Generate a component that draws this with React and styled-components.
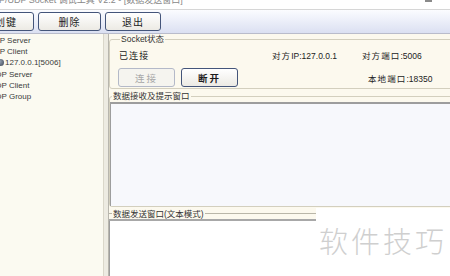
import styled, { createGlobalStyle } from 'styled-components';

const Global = createGlobalStyle`
  html, body {
    margin: 0;
    padding: 0;
    background: #ffffff;
    overflow: hidden;
  }
`

const Page = styled.div`
  position: relative;
  width: 450px;
  height: 276px;
  overflow: hidden;
  display: flex;
  flex-direction: column;
  font-family: "Liberation Sans", "Noto Sans CJK SC", sans-serif;
  color: #222;
`

const TitleBar = styled.div`
  height: 9px;
  display: flex;
  align-items: flex-end;
  overflow: hidden;
  background: #ffffff;
  border-bottom: 1px solid #d6d6d6;
`

const TitleText = styled.div`
  font-size: 9px;
  line-height: 10px;
  margin: 0 0 4px -13px;
  color: #888;
  white-space: nowrap;
`

const CloseMark = styled.div`
  margin: 0 18px auto auto;
  width: 7px;
  height: 2px;
  background: #8a8a8a;
`

const Toolbar = styled.div`
  height: 23px;
  display: flex;
  align-items: center;
  gap: 4px;
  background: linear-gradient(#fbfcff, #dbe0f2);
  border-bottom: 1px solid #b9bccb;
`

const ToolButton = styled.button`
  flex: none;
  width: ${p => p.$w}px;
  height: 19px;
  margin-left: ${p => p.$shift || 0}px;
  padding: 0;
  border: 1px solid #44557a;
  border-radius: 3px;
  background: linear-gradient(#ffffff, #eceae4);
  font-family: inherit;
  font-size: 10px;
  letter-spacing: 1px;
  color: #1c1c1c;
`

const Main = styled.div`
  flex: 1;
  display: flex;
  min-height: 0;
  background: #fcf9ee;
`

const Tree = styled.div`
  width: 103px;
  flex: none;
  padding-top: 1px;
  overflow: hidden;
  background: #fbfaf1;
`

const TreeItem = styled.div`
  height: 11.2px;
  line-height: 11.2px;
  font-size: 8px;
  white-space: nowrap;
  display: flex;
  align-items: center;
  gap: 1px;
  margin-left: ${p => p.$indent}px;
  color: #3a3a3a;
`

const NodeDot = styled.span`
  width: 7px;
  height: 7px;
  border-radius: 50%;
  background: radial-gradient(circle at 35% 35%, #9aa7b8, #3a4250);
`

const Splitter = styled.div`
  width: 4px;
  flex: none;
  background: #edebe2;
  border-left: 1px solid #dad7ca;
`

const Right = styled.div`
  flex: 1;
  min-width: 0;
  display: flex;
  flex-direction: column;
  border-left: 1px solid #b8b6ae;
`

const Group = styled.fieldset`
  margin: ${p => p.$top || 0}px -12px 0 0;
  padding: ${p => p.$pad || '0'};
  border: 1px solid #d3cfbe;
  border-radius: 3px;
  min-width: 0;
`

const Legend = styled.legend`
  font-size: 8.5px;
  line-height: 10px;
  padding: 0 1px;
  margin-left: 2px;
  color: #333;
`

const StatusGrid = styled.div`
  display: grid;
  grid-template-columns: 154px 90px 1fr;
  grid-template-rows: 22px 19px;
  row-gap: 2px;
  align-items: center;
`

const StatusText = styled.div`
  font-size: ${p => p.$size || 8.5}px;
  padding-left: ${p => p.$indent || 0}px;
  white-space: nowrap;
  color: #222;
  span {
    letter-spacing: 1.1px;
  }
`

const ButtonRow = styled.div`
  display: flex;
  gap: 6px;
`

const ActionButton = styled.button`
  width: 57px;
  height: 19px;
  padding: 0;
  border: 1px solid ${p => (p.disabled ? '#b4b9c8' : '#44557a')};
  border-radius: 3px;
  background: ${p => (p.disabled ? '#f5f4ef' : 'linear-gradient(#ffffff, #eceae4)')};
  color: ${p => (p.disabled ? '#a8a8a8' : '#1c1c1c')};
  font-family: inherit;
  font-size: 9.5px;
  font-weight: ${p => (p.disabled ? 400 : 700)};
  letter-spacing: 2px;
`

const RecvArea = styled.div`
  height: 102px;
  margin-top: 1px;
  background: #f7f8fc;
  border-top: 2px solid #9d9d9d;
  border-left: 1px solid #9d9d9d;
`

const SendSection = styled.div`
  flex: 1;
  display: flex;
  flex-direction: column;
  margin-top: 1px;
  background: #ffffff;
`

const SendHeader = styled.div`
  width: 207px;
  height: 11px;
  display: flex;
  align-items: center;
  gap: 1px;
  background: #fcf9ee;
  border-bottom: 2px solid #a8a8a8;
  &::before {
    content: '';
    width: 3px;
    height: 1px;
    background: #b9b6a8;
  }
  &::after {
    content: '';
    flex: 1;
    height: 1px;
    background: #b9b6a8;
  }
`

const SendLabel = styled.span`
  font-size: 8.5px;
  line-height: 10px;
  color: #333;
`

const SendArea = styled.div`
  flex: 1;
  background: #ffffff;
  border-left: 1px solid #9d9d9d;
`

const Watermark = styled.div`
  position: absolute;
  left: 319px;
  top: 224px;
  font-family: "Noto Sans CJK SC", sans-serif;
  font-weight: 300;
  font-size: 29px;
  line-height: 32px;
  letter-spacing: 3px;
  color: #cfcfcf;
  white-space: nowrap;
`

const treeItems = [
  { label: 'TCP Server', indent: -11 },
  { label: 'TCP Client', indent: -11 },
  { label: '127.0.0.1[5006]', indent: -3, node: true },
  { label: 'UDP Server', indent: -10 },
  { label: 'UDP Client', indent: -10 },
  { label: 'UDP Group', indent: -10 },
]

export default function App() {
  return (
    <Page>
      <Global />
      <TitleBar>
        <TitleText>TCP/UDP Socket 调试工具 V2.2 - [数据发送窗口]</TitleText>
        <CloseMark />
      </TitleBar>
      <Toolbar>
        <ToolButton $w={56} $shift={-22}>创键</ToolButton>
        <ToolButton $w={63}>删除</ToolButton>
        <ToolButton $w={56}>退出</ToolButton>
      </Toolbar>
      <Main>
        <Tree>
          {treeItems.map((item) => (
            <TreeItem key={item.label} $indent={item.indent}>
              {item.node && <NodeDot />}
              {item.label}
            </TreeItem>
          ))}
        </Tree>
        <Splitter />
        <Right>
          <Group $pad="0 0 1px 8px">
            <Legend>Socket状态</Legend>
            <StatusGrid>
              <StatusText $size={9} $indent={1}><span>已连接</span></StatusText>
              <StatusText><span>对方</span>IP:127.0.0.1</StatusText>
              <StatusText><span>对方端口</span>:5006</StatusText>
              <ButtonRow>
                <ActionButton disabled>连接</ActionButton>
                <ActionButton>断开</ActionButton>
              </ButtonRow>
              <div />
              <StatusText $indent={6}><span>本地端口</span>:18350</StatusText>
            </StatusGrid>
          </Group>
          <Group $top={2}>
            <Legend>数据接收及提示窗口</Legend>
            <RecvArea />
          </Group>
          <SendSection>
            <SendHeader>
              <SendLabel>数据发送窗口(文本模式)</SendLabel>
            </SendHeader>
            <SendArea />
          </SendSection>
        </Right>
      </Main>
      <Watermark>软件技巧</Watermark>
    </Page>
  )
}
